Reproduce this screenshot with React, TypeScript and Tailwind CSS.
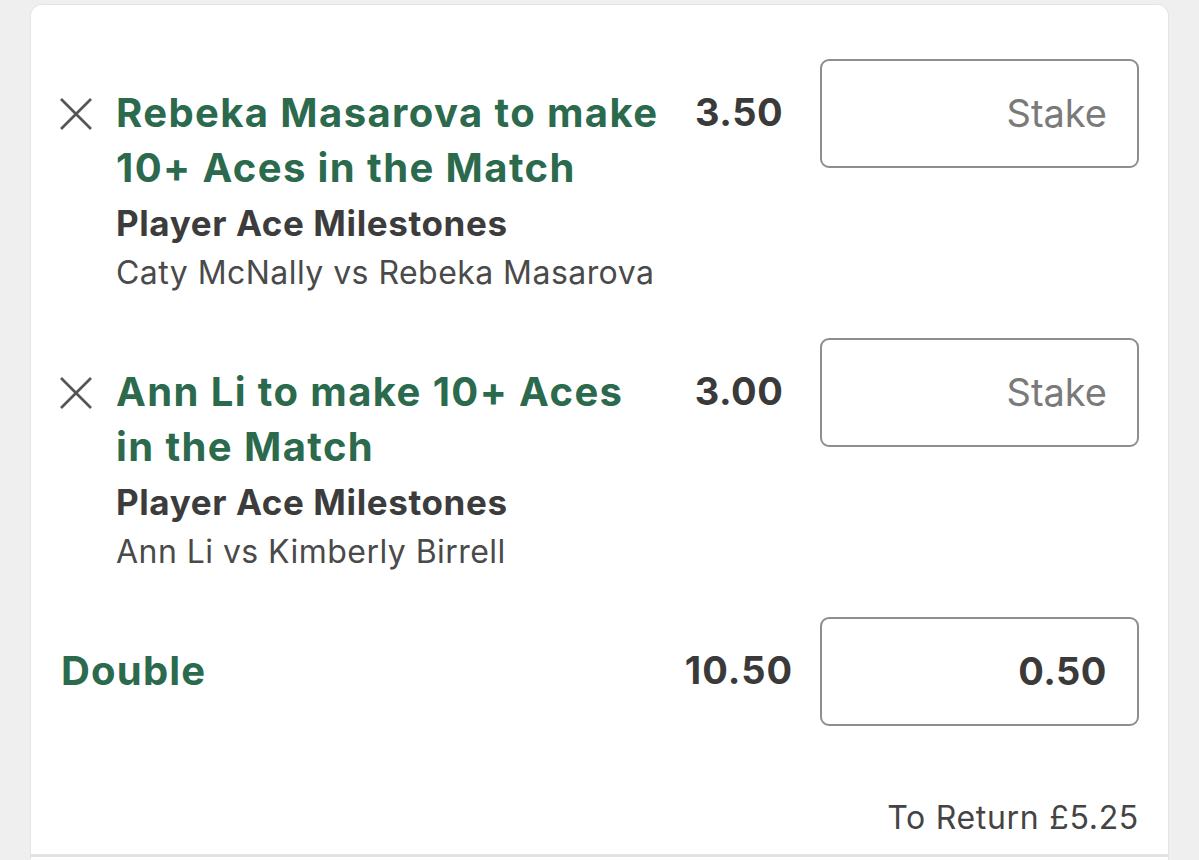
import React from 'react';

interface Selection {
  title: string;
  market: string;
  event: string;
  odds: string;
}

const selections: Selection[] = [
  {
    title: 'Rebeka Masarova to make 10+ Aces in the Match',
    market: 'Player Ace Milestones',
    event: 'Caty McNally vs Rebeka Masarova',
    odds: '3.50',
  },
  {
    title: 'Ann Li to make 10+ Aces in the Match',
    market: 'Player Ace Milestones',
    event: 'Ann Li vs Kimberly Birrell',
    odds: '3.00',
  },
];

// 닫기 아이콘 (얇은 X)
function CloseIcon() {
  return (
    <svg width="34" height="34" viewBox="0 0 34 34" className="shrink-0">
      <line x1="2" y1="2" x2="32" y2="32" stroke="#555" strokeWidth="2.6" />
      <line x1="32" y1="2" x2="2" y2="32" stroke="#555" strokeWidth="2.6" />
    </svg>
  );
}

function StakeBox({ value }: { value?: string }) {
  return (
    <div className="w-[319px] h-[109px] shrink-0 rounded-[9px] border-2 border-[#8e8e8e] bg-white flex items-center justify-end pr-[30px]">
      {value ? (
        <span className="text-[38px] font-bold text-[#3a3a3a] tracking-[0.5px]">{value}</span>
      ) : (
        <span className="text-[38px] text-[#7a7a7a]">Stake</span>
      )}
    </div>
  );
}

export default function App() {
  return (
    <div
      className="min-h-[860px] bg-[#efefef] px-[30px] pt-[4px]"
      style={{ fontFamily: 'Inter, "Noto Sans", sans-serif' }}
    >
      <div className="bg-white rounded-t-[12px] border border-[#e4e4e4] border-b-0 pr-[29px] pt-[54px]">
        {selections.map((s, i) => (
          <div key={i} className="flex items-start h-[279px]">
            <div className="w-[85px] shrink-0 flex justify-end pr-[23px] pt-[38px]">
              <CloseIcon />
            </div>
            <div className="flex-1 pt-[26px]">
              <div className="text-[40px] leading-[55px] font-bold text-[#2b6a4d] tracking-[1.4px] max-w-[548px]">
                {s.title}
              </div>
              <div className="text-[35px] leading-[52px] font-bold text-[#3c3c3c] tracking-[0.6px] mt-[2px]">
                {s.market}
              </div>
              <div className="text-[32px] leading-[48px] text-[#4a4a4a] tracking-[0.45px]">{s.event}</div>
            </div>
            <div className="w-[130px] shrink-0 text-center pt-[26px] mr-[16px] text-[38px] leading-[55px] font-bold text-[#3a3a3a] tracking-[0.5px]">
              {s.odds}
            </div>
            <StakeBox />
          </div>
        ))}

        <div className="flex items-start">
          <div className="flex-1 pl-[30px] pt-[26px] text-[40px] leading-[55px] font-bold text-[#2b6a4d] tracking-[1.2px]">
            Double
          </div>
          <div className="w-[130px] shrink-0 text-center pt-[26px] mr-[16px] text-[38px] leading-[55px] font-bold text-[#3a3a3a] tracking-[1px]">
            10.50
          </div>
          <StakeBox value="0.50" />
        </div>

        <div className="flex justify-end pt-[68px] pb-[12px] text-[32px] leading-[48px] text-[#444] tracking-[0.7px]">
          To Return £5.25
        </div>
        <div className="h-[3px] bg-[#e2e2e2] -mr-[29px]" />
        <div className="h-[10px]" />
      </div>
    </div>
  );
}
